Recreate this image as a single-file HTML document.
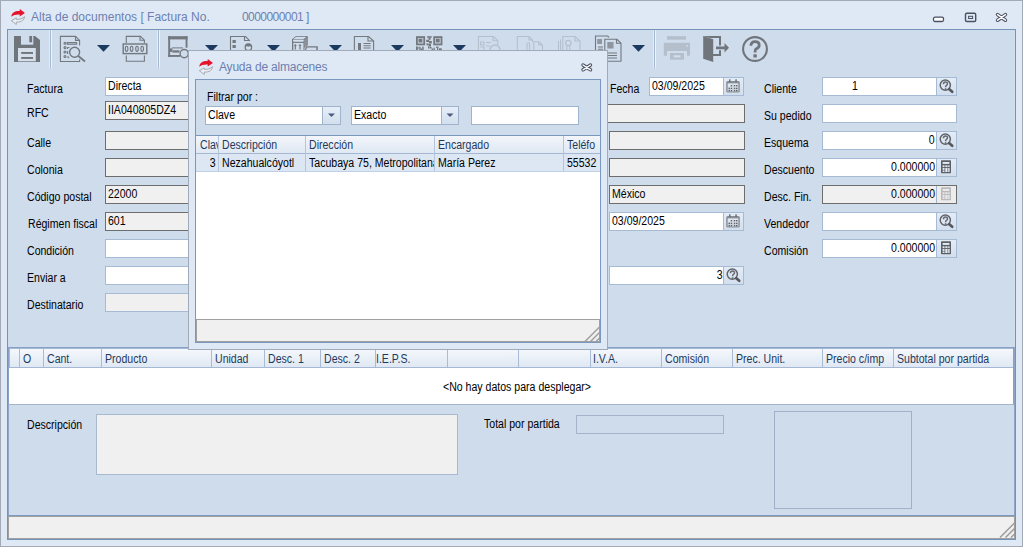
<!DOCTYPE html>
<html><head><meta charset="utf-8">
<style>
*{margin:0;padding:0;box-sizing:border-box}
html,body{width:1023px;height:547px;overflow:hidden}
body{position:relative;background:#dfe9f5;font-family:"Liberation Sans",sans-serif;font-size:11px;color:#000;letter-spacing:-0.2px}
.a{position:absolute}
.win{left:0;top:0;width:1023px;height:547px;border:1px solid #a3aab5}
.title{left:31px;top:10px;font-size:12px;letter-spacing:0;color:#6d7fb0;white-space:pre}
.panel{left:7px;top:29px;width:1009px;height:511px;background:#cfdcec;border:1px solid #7393b9}
.lbl{white-space:nowrap;line-height:12px}
.inp{background:#fff;border:1px solid #a7bad4;height:19px;line-height:16px;padding-left:2px;white-space:nowrap;overflow:hidden}
.dis{background:#f0f0f0;border:1px solid #6d6d6d;height:19px;line-height:16px;padding-left:2px;white-space:nowrap;overflow:hidden}
.disl{background:#f0f0f0;border:1px solid #a7bad4;height:19px}
.sep{width:2px;background:linear-gradient(90deg,#a9bdd6 0 1px,#f4f8fc 1px 2px)}
.btn{width:21px;height:19px;border:1px solid #a7bad4;background:linear-gradient(#e3ecf7,#d3dfee)}
.btn svg{display:block}
.hd{color:#1e395d;line-height:16px;white-space:nowrap}
.tx{position:absolute;font-size:12px;line-height:13px;letter-spacing:0;white-space:nowrap;transform:scaleX(.88);transform-origin:0 0}
.txr{transform-origin:100% 0}
.txc{transform-origin:50% 0}
.dd{width:0;height:0;border-left:6.5px solid transparent;border-right:6.5px solid transparent;border-top:7px solid #1b3a60}
</style></head><body>
<div class="a win"></div>

<!-- title icon -->
<svg class="a" style="left:10px;top:8px" width="17" height="17" viewBox="0 0 17 17">
  <path d="M1.3 8.8 C1.6 5 4.6 3 9.6 3.1 L9.8 1 L14.9 5 L9.7 8.4 L9.7 6.6 C6 6.4 3.4 7.2 1.3 8.8 Z" fill="#e5142b"/>
  <path d="M14.6 8.6 C14.2 12.2 11.4 14.2 6.4 14.1 L6.3 16.5 L1.3 12.7 L6.3 9.9 L6.3 11.4 C10 11.5 12.6 10.6 14.6 8.6 Z" fill="#e9eef4" stroke="#a7abb0" stroke-width="1"/>
</svg>
<div class="a title">Alta de documentos [ Factura No.</div>
<div class="a title" style="left:242px;letter-spacing:-0.55px">0000000001 ]</div>

<!-- window controls -->
<svg class="a" style="left:930px;top:10px" width="80" height="15" viewBox="0 0 80 15">
  <rect x="3.5" y="7.2" width="10" height="4.3" rx="1.5" fill="#fff" stroke="#4b5062" stroke-width="1.3"/>
  <rect x="35.5" y="3.3" width="10.2" height="8.2" rx="1.3" fill="none" stroke="#4b5062" stroke-width="1.4"/>
  <rect x="38.6" y="6.3" width="4" height="2.2" fill="none" stroke="#4b5062" stroke-width="1"/>
  <path d="M67.6 4.6 L75.4 10.2 M75.4 4.6 L67.6 10.2" stroke="#4b5062" stroke-width="3.6" stroke-linecap="round"/>
  <path d="M67.6 4.6 L75.4 10.2 M75.4 4.6 L67.6 10.2" stroke="#fff" stroke-width="1.5" stroke-linecap="round"/>
</svg>

<div class="a panel"></div>

<!-- TOOLBAR -->
<svg class="a" style="left:0;top:0" width="800" height="70" viewBox="0 0 800 70">
<g fill="none" stroke-linejoin="miter">
<!-- separators -->
<rect x="49" y="30" width="1" height="38" fill="#e4ebf5"/><rect x="50" y="30" width="1" height="38" fill="#a6b9d3"/><rect x="51" y="30" width="1" height="38" fill="#eef3f9"/>
<rect x="157" y="30" width="1" height="38" fill="#e4ebf5"/><rect x="158" y="30" width="1" height="38" fill="#a6b9d3"/><rect x="159" y="30" width="1" height="38" fill="#eef3f9"/>
<rect x="653" y="30" width="1" height="38" fill="#e4ebf5"/><rect x="654" y="30" width="1" height="38" fill="#a6b9d3"/><rect x="655" y="30" width="1" height="38" fill="#eef3f9"/>
<!-- save -->
<path d="M14 36 H35 L40 40 V62 H14 Z" fill="#70757c"/>
<rect x="21" y="36" width="12.3" height="8.7" fill="#cfdcec"/>
<rect x="29.3" y="36" width="2.8" height="6.3" fill="#70757c"/>
<rect x="18" y="48" width="17.8" height="13.3" fill="#d4dfeb"/>
<rect x="21.2" y="52" width="11.8" height="1.9" fill="#70757c"/>
<rect x="21.2" y="57" width="11.8" height="1.9" fill="#70757c"/>
<!-- search doc -->
<g stroke="#73787f" stroke-width="1.1">
<path d="M79.6 45.5 V40.4 L75.5 36.4 H60.4 V61.5 H79.6 V59.5"/>
<path d="M75.5 36.4 V40.4 H79.6"/>
<rect x="67.3" y="42.6" width="9.3" height="1.6"/>
<circle cx="65" cy="43.3" r="1"/><circle cx="65" cy="47.6" r="1"/><circle cx="65" cy="52" r="1"/><circle cx="65" cy="56.5" r="1"/>
<path d="M67.5 47.5 H69.5 M67.5 49 V47.5 M67.6 51 V54 M67.5 56.5 L69 58"/>
<circle cx="74.6" cy="52.2" r="5" stroke-width="1.4"/>
<path d="M78.3 56 L85 61.5" stroke-width="1.8"/>
</g>
<!-- dropdown arrows -->
<g fill="#1b3a60">
<path d="M97 45 H110 L103.5 51.8 Z"/>
<path d="M205 45 H218 L211.5 51.8 Z"/>
<path d="M267 45 H280 L273.5 51.8 Z"/>
<path d="M329 45 H342 L335.5 51.8 Z"/>
<path d="M391 45 H404 L397.5 51.8 Z"/>
<path d="M453 45 H466 L459.5 51.8 Z"/>
<path d="M632 45 H645 L638.5 51.8 Z"/>
</g>
<!-- 0000 -->
<g stroke="#73787f" stroke-width="1.1">
<path d="M126.3 43 V36.4 H140.5 L144.4 40.3 V43"/>
<path d="M140 36.4 V40.3 H144.4"/>
<path d="M126.3 55.5 V61.3 H144.4 V55.5"/>
<rect x="123.2" y="44" width="23.6" height="9.6" stroke-width="1.4"/>
<ellipse cx="126.6" cy="48.8" rx="1.3" ry="2.6"/><ellipse cx="131.6" cy="48.8" rx="1.3" ry="2.6"/>
<ellipse cx="137" cy="48.8" rx="1.3" ry="2.6"/><ellipse cx="142.2" cy="48.8" rx="1.3" ry="2.6"/>
</g>
<!-- monitor icon -->
<g fill="#73787f">
<rect x="168.2" y="36.2" width="19.3" height="3.2"/>
<rect x="168.2" y="36.2" width="1.9" height="20.7"/>
<rect x="185.6" y="36.2" width="1.9" height="11.5"/>
<rect x="168.2" y="55" width="12" height="1.9"/>
<rect x="172" y="47.4" width="11" height="1"/>
<rect x="170" y="48.4" width="2.4" height="3.5"/>
<rect x="172.4" y="50.3" width="7" height="2.3"/>
</g>
<circle cx="184.2" cy="53.6" r="4.1" fill="#cfdcec" stroke="#73787f" stroke-width="1.4"/>
<!-- icon 7 person doc -->
<g stroke="#73787f" stroke-width="1.1" fill="none">
<path d="M230.5 50 V36.5 H245.5 L249.8 40.8"/>
<path d="M244.5 36.5 V40.5 H249.8"/>
</g>
<g fill="#73787f">
<rect x="232.5" y="40" width="3.3" height="3"/><rect x="232.5" y="45" width="3.3" height="3"/>
</g>
<circle cx="248.4" cy="47.2" r="3.2" fill="#d5dfea" stroke="#73787f" stroke-width="1.3"/>
<path d="M245.2 47 A3.2 3.2 0 0 1 251.6 47 Q250 45.6 248.4 46.8 Q246.8 45.6 245.2 47 Z" fill="#73787f"/>
<!-- icon 8 box truck -->
<g fill="#73787f">
<path d="M292 50 V39.3 L296 36 H307.7 V45 L304.3 48.5 V50 H303.5 V39.8 H293.3 V50 Z"/>
<path d="M293 39.3 L296.3 36.8 H306.5 L303.5 39.3 Z" fill="#cfdcec"/>
<path d="M304 40 L307.7 36.5 V45 L304 48.5 Z" fill="#8b9096"/>
<rect x="293" y="41.6" width="11" height="1.3" fill="#73787f"/>
<rect x="293.3" y="40.1" width="10.2" height="1.3" fill="#d8e2ee"/>
<path d="M295.3 44 L297 45.8 H295.9 V49.5 H294.7 V45.8 H293.6 Z M300 44 L301.7 45.8 H300.6 V49.5 H299.4 V45.8 H298.3 Z"/>
<path d="M304.5 50 L306.8 46.3 H317.8 V50 H316.3 V47.6 H307.3 L305.9 50 Z"/>
</g>
<!-- icon 9 doc lines -->
<g stroke="#73787f" stroke-width="1.1">
<path d="M354.4 50 V36.5 H368.6 L373.6 41 V50"/>
<path d="M368 36.5 V41 H373.6"/>
<path d="M363.5 43.5 H370.7 M363.5 45.8 H370.7 M363.5 48 H370.7"/>
</g>
<rect x="358" y="43" width="3" height="7" fill="#73787f"/>
<!-- icon 10 QR -->
<g stroke="#73787f" stroke-width="1.8" fill="none">
<rect x="416.9" y="37.1" width="7.3" height="7.3"/><rect x="434.2" y="37.1" width="7.3" height="7.3"/>
</g>
<g fill="#73787f">
<rect x="418.5" y="38.6" width="3.9" height="3.9"/><rect x="435.8" y="38.6" width="3.9" height="3.9"/>
<rect x="427.2" y="36.2" width="4.5" height="1.6"/><rect x="428.5" y="37.8" width="2" height="2"/>
<rect x="426.2" y="39.8" width="3" height="2.2"/><rect x="429" y="41" width="2.8" height="2.5"/>
<rect x="426.5" y="43.3" width="2" height="2"/><rect x="428.5" y="44" width="2.5" height="2.5"/><rect x="428" y="46.5" width="1.6" height="2"/>
<rect x="416" y="46.5" width="1.8" height="3.5"/><rect x="417.8" y="47.3" width="1.5" height="1.3"/><rect x="419.3" y="46.6" width="1.3" height="3.4"/><rect x="420.6" y="48.4" width="1.5" height="1.6"/><rect x="422.2" y="46.6" width="1.5" height="3.4"/>
<rect x="430" y="47" width="1.6" height="1.5"/><rect x="431.6" y="48.5" width="1.5" height="1.5"/><rect x="433.5" y="47.6" width="1.3" height="2.4"/>
<rect x="436" y="46.6" width="2.5" height="1.3"/><rect x="437" y="47.9" width="1.3" height="2.1"/><rect x="439" y="48.3" width="2.8" height="1.7"/>
</g>
<!-- disabled icons -->
<g stroke="#b4c0ce" stroke-width="1.1">
<path d="M478.4 50 V36.5 H493.5 L497.8 40.8 V45"/>
<path d="M493 36.5 V40.8 H497.8"/>
<path d="M480.5 42 H484 V45 H480.5 Z M486 42.5 H491 M480.5 47 H484 V50 M486 46 H490"/>
<path d="M490 50 A5 5 0 0 1 500 50" stroke-width="1.4"/>
<path d="M517.3 50 V36.5 H529 L532.5 40 V42 M529 36.5 V40 H532.5"/>
<path d="M533.8 50 V41.8 H539 L542.5 45 V50 M538.8 41.8 V45 H542.5"/>
<path d="M527 50 V44 A1.3 1.3 0 0 1 529.6 44 V50"/>
<path d="M558.5 50 V41 M560.6 50 V39.5"/>
<path d="M562.8 50 V36.5 H575 L580 41 V50 M575 36.5 V41 H580"/>
<circle cx="568.3" cy="43" r="2.7" stroke-width="1.2"/>
<path d="M566.8 45.5 V50 M569.8 45.5 V50"/>
</g>
<!-- icon 14 docs QR -->
<g stroke="#73787f" stroke-width="1.1">
<path d="M595.5 50 V36 H607.7 L609 37.3"/>
<path d="M604.8 61.2 V39.3 H617 L621 43.3 V61.2 Z" fill="#cfdcec"/>
<path d="M616.5 39.3 V43.3 H621"/>
<path d="M598 47 H603 M598 49.3 H603"/>
<path d="M608 53 H617 M608 55.5 H617 M608 58 H617"/>
</g>
<g fill="#73787f">
<rect x="597.2" y="39" width="4.8" height="5" opacity="0.7"/>
<rect x="607.3" y="42" width="6.2" height="6.5" opacity="0.7"/>
</g>
<!-- printer disabled -->
<g fill="#b4bfcb">
<rect x="667" y="36.2" width="19" height="3.5"/>
<path d="M663.8 42.8 H690 V55.8 H687 V51 H667 V55.8 H663.8 Z"/>
<rect x="670" y="53" width="14" height="6.7"/>
</g>
<rect x="673.5" y="55.2" width="7" height="2.3" fill="#cfdcec"/>
<rect x="686.3" y="45" width="1.6" height="1.6" fill="#cfdcec"/>
<!-- exit door -->
<g fill="#70757c">
<path d="M703.2 36 L713.2 39.2 V62 L703.2 58.8 Z"/>
<path d="M703.2 36 H721 V45.5 H719 V38 H710 Z"/>
<path d="M712 56 H721 V50.2 H719 V54 H712 Z"/>
<path d="M716 46.4 H724.5 V43 L729 47.8 L724.5 52.6 V49.2 H716 Z"/>
</g>
<!-- help -->
<circle cx="755" cy="49" r="11.9" stroke="#70757c" stroke-width="2.1" fill="none"/>
<path d="M750.9 45.8 Q751 41.6 755.1 41.6 Q759.2 41.6 759.2 45.2 Q759.2 47.5 756.6 48.6 Q755.1 49.3 755.1 51.5 V52.5" stroke="#70757c" stroke-width="2.8" fill="none"/>
<rect x="753.4" y="54.3" width="3.4" height="3.2" fill="#70757c"/>
</g>
</svg>


<!-- LEFT FORM -->

<div class="a inp" style="left:105px;top:77px;width:300px"></div>
<div class="a dis" style="left:105px;top:101px;width:300px"></div>
<div class="a dis" style="left:105px;top:131px;width:300px"></div>
<div class="a dis" style="left:105px;top:158px;width:300px"></div>
<div class="a dis" style="left:105px;top:185px;width:300px"></div>
<div class="a dis" style="left:105px;top:212px;width:300px"></div>
<div class="a inp" style="left:105px;top:239px;width:300px"></div>
<div class="a inp" style="left:105px;top:266px;width:300px"></div>
<div class="a disl" style="left:105px;top:293px;width:300px"></div>


<!-- RIGHT FORM COL 1 -->
<div class="a inp" style="left:649px;top:77px;width:75px"></div>
<div class="a btn" style="left:723px;top:77px"><svg width="19" height="17"><rect x="2.2" y="3" width="13.6" height="11.6" rx="1.5" fill="#8a8f96"/><rect x="3.7" y="5.4" width="10.6" height="8" fill="#e2eaf4"/><rect x="5" y="1.3" width="1.5" height="3" fill="#6d7279"/><rect x="11.3" y="1.3" width="1.5" height="3" fill="#6d7279"/><g fill="#5d6168"><rect x="6.7" y="7" width="1.5" height="1.5"/><rect x="9.8" y="7" width="1.5" height="1.5"/><rect x="12" y="7" width="1.5" height="1.5"/><rect x="4.5" y="9.6" width="1.5" height="1.5"/><rect x="6.7" y="9.6" width="1.5" height="1.5"/><rect x="9.8" y="9.6" width="1.5" height="1.5"/><rect x="12" y="9.6" width="1.5" height="1.5"/><rect x="4.5" y="11.9" width="1.5" height="1.5"/><rect x="6.7" y="11.9" width="1.5" height="1.5"/><rect x="9.8" y="11.9" width="1.5" height="1.5"/><rect x="12" y="11.9" width="1.5" height="1.5"/></g><g fill="#c4ccd6"><rect x="4" y="8.7" width="10" height="0.6"/><rect x="4" y="11.2" width="10" height="0.6"/><rect x="8.6" y="6" width="0.8" height="7"/></g></svg></div>
<div class="a dis" style="left:560px;top:104px;width:185px"></div>
<div class="a dis" style="left:609px;top:131px;width:136px"></div>
<div class="a dis" style="left:609px;top:158px;width:136px"></div>
<div class="a dis" style="left:609px;top:185px;width:136px"></div>
<div class="a inp" style="left:609px;top:212px;width:115px"></div>
<div class="a btn" style="left:723px;top:212px"><svg width="19" height="17"><rect x="2.2" y="3" width="13.6" height="11.6" rx="1.5" fill="#8a8f96"/><rect x="3.7" y="5.4" width="10.6" height="8" fill="#e2eaf4"/><rect x="5" y="1.3" width="1.5" height="3" fill="#6d7279"/><rect x="11.3" y="1.3" width="1.5" height="3" fill="#6d7279"/><g fill="#5d6168"><rect x="6.7" y="7" width="1.5" height="1.5"/><rect x="9.8" y="7" width="1.5" height="1.5"/><rect x="12" y="7" width="1.5" height="1.5"/><rect x="4.5" y="9.6" width="1.5" height="1.5"/><rect x="6.7" y="9.6" width="1.5" height="1.5"/><rect x="9.8" y="9.6" width="1.5" height="1.5"/><rect x="12" y="9.6" width="1.5" height="1.5"/><rect x="4.5" y="11.9" width="1.5" height="1.5"/><rect x="6.7" y="11.9" width="1.5" height="1.5"/><rect x="9.8" y="11.9" width="1.5" height="1.5"/><rect x="12" y="11.9" width="1.5" height="1.5"/></g><g fill="#c4ccd6"><rect x="4" y="8.7" width="10" height="0.6"/><rect x="4" y="11.2" width="10" height="0.6"/><rect x="8.6" y="6" width="0.8" height="7"/></g></svg></div>
<div class="a inp" style="left:609px;top:266px;width:115px"></div>
<div class="a btn" style="left:723px;top:266px"><svg width="19" height="17"><circle cx="8.3" cy="7.1" r="5.1" fill="none" stroke="#5f6369" stroke-width="1.5"/><path d="M6.4 6.2 Q6.5 3.9 8.5 3.9 Q10.5 3.9 10.5 5.7 Q10.5 6.8 9.4 7.4 Q8.6 7.9 8.6 9.2" fill="none" stroke="#686c72" stroke-width="1.5"/><rect x="7.8" y="10.2" width="1.6" height="1.6" fill="#686c72"/><path d="M12.3 11.2 L15.2 13.8" stroke="#55595f" stroke-width="2.7" stroke-linecap="round"/></svg></div>

<!-- RIGHT FORM COL 2 -->

<div class="a inp" style="left:822px;top:77px;width:115px"></div>
<div class="a btn" style="left:936px;top:77px"><svg width="19" height="17"><circle cx="8.3" cy="7.1" r="5.1" fill="none" stroke="#5f6369" stroke-width="1.5"/><path d="M6.4 6.2 Q6.5 3.9 8.5 3.9 Q10.5 3.9 10.5 5.7 Q10.5 6.8 9.4 7.4 Q8.6 7.9 8.6 9.2" fill="none" stroke="#686c72" stroke-width="1.5"/><rect x="7.8" y="10.2" width="1.6" height="1.6" fill="#686c72"/><path d="M12.3 11.2 L15.2 13.8" stroke="#55595f" stroke-width="2.7" stroke-linecap="round"/></svg></div>
<div class="a inp" style="left:822px;top:104px;width:135px"></div>
<div class="a inp" style="left:822px;top:131px;width:115px"></div>
<div class="a btn" style="left:936px;top:131px"><svg width="19" height="17"><circle cx="8.3" cy="7.1" r="5.1" fill="none" stroke="#5f6369" stroke-width="1.5"/><path d="M6.4 6.2 Q6.5 3.9 8.5 3.9 Q10.5 3.9 10.5 5.7 Q10.5 6.8 9.4 7.4 Q8.6 7.9 8.6 9.2" fill="none" stroke="#686c72" stroke-width="1.5"/><rect x="7.8" y="10.2" width="1.6" height="1.6" fill="#686c72"/><path d="M12.3 11.2 L15.2 13.8" stroke="#55595f" stroke-width="2.7" stroke-linecap="round"/></svg></div>
<div class="a inp" style="left:822px;top:158px;width:115px"></div>
<div class="a btn" style="left:936px;top:158px;color:#5f6369"><svg width="19" height="17"><rect x="4" y="1.3" width="10" height="12.9" rx="0.7" fill="#5c6066"/><rect x="5.6" y="3" width="6.8" height="1.9" fill="#e4ebf4"/><g fill="#e4ebf4"><rect x="5.6" y="6.3" width="1.9" height="1.8"/><rect x="8.3" y="6.3" width="2.2" height="1.8"/><rect x="11.2" y="6.3" width="1.4" height="1.8"/><rect x="5.6" y="9" width="1.9" height="1.9"/><rect x="8.3" y="9" width="2.2" height="4"/><rect x="11.2" y="9" width="1.4" height="4"/><rect x="5.6" y="11.5" width="1.9" height="1.5"/></g></svg></div>
<div class="a dis" style="left:822px;top:185px;width:135px"></div>
<div class="a" style="left:936px;top:186px;width:20px;height:17px;border-left:1px solid #a4b5cf;background:#ececec;color:#b3b3b3"><svg width="19" height="17"><rect x="4" y="1.3" width="10" height="12.9" rx="0.7" fill="#b9b9b9"/><rect x="5.6" y="3" width="6.8" height="1.9" fill="#ececec"/><g fill="#ececec"><rect x="5.6" y="6.3" width="1.9" height="1.8"/><rect x="8.3" y="6.3" width="2.2" height="1.8"/><rect x="11.2" y="6.3" width="1.4" height="1.8"/><rect x="5.6" y="9" width="1.9" height="1.9"/><rect x="8.3" y="9" width="2.2" height="4"/><rect x="11.2" y="9" width="1.4" height="4"/><rect x="5.6" y="11.5" width="1.9" height="1.5"/></g></svg></div>
<div class="a inp" style="left:822px;top:212px;width:115px"></div>
<div class="a btn" style="left:936px;top:212px"><svg width="19" height="17"><circle cx="8.3" cy="7.1" r="5.1" fill="none" stroke="#5f6369" stroke-width="1.5"/><path d="M6.4 6.2 Q6.5 3.9 8.5 3.9 Q10.5 3.9 10.5 5.7 Q10.5 6.8 9.4 7.4 Q8.6 7.9 8.6 9.2" fill="none" stroke="#686c72" stroke-width="1.5"/><rect x="7.8" y="10.2" width="1.6" height="1.6" fill="#686c72"/><path d="M12.3 11.2 L15.2 13.8" stroke="#55595f" stroke-width="2.7" stroke-linecap="round"/></svg></div>
<div class="a inp" style="left:822px;top:239px;width:115px"></div>
<div class="a btn" style="left:936px;top:239px;color:#5f6369"><svg width="19" height="17"><rect x="4" y="1.3" width="10" height="12.9" rx="0.7" fill="#5c6066"/><rect x="5.6" y="3" width="6.8" height="1.9" fill="#e4ebf4"/><g fill="#e4ebf4"><rect x="5.6" y="6.3" width="1.9" height="1.8"/><rect x="8.3" y="6.3" width="2.2" height="1.8"/><rect x="11.2" y="6.3" width="1.4" height="1.8"/><rect x="5.6" y="9" width="1.9" height="1.9"/><rect x="8.3" y="9" width="2.2" height="4"/><rect x="11.2" y="9" width="1.4" height="4"/><rect x="5.6" y="11.5" width="1.9" height="1.5"/></g></svg></div>

<!-- MAIN GRID -->
<div class="a" style="left:8px;top:347px;width:1006px;height:58px;background:#fff;border:1px solid #86a1c5;border-bottom-color:#a3b5cd"></div>
<div class="a" style="left:9px;top:348px;width:1004px;height:20px;border-top:1px solid #a6b9d3;border-left:1px solid #a6b9d3"></div>
<div class="a" style="left:10px;top:349px;width:1003px;height:19px;background:linear-gradient(#f5f8fc,#dfe8f3);border-bottom:1px solid #a4b8d3"></div>
<div class="a" style="left:19px;top:349px;width:1px;height:18px;background:#a9bcd6"></div>
<div class="a" style="left:43px;top:349px;width:1px;height:18px;background:#a9bcd6"></div>
<div class="a" style="left:101px;top:349px;width:1px;height:18px;background:#a9bcd6"></div>
<div class="a" style="left:211px;top:349px;width:1px;height:18px;background:#a9bcd6"></div>
<div class="a" style="left:264px;top:349px;width:1px;height:18px;background:#a9bcd6"></div>
<div class="a" style="left:320px;top:349px;width:1px;height:18px;background:#a9bcd6"></div>
<div class="a" style="left:375px;top:349px;width:1px;height:18px;background:#a9bcd6"></div>
<div class="a" style="left:447px;top:349px;width:1px;height:18px;background:#a9bcd6"></div>
<div class="a" style="left:518px;top:349px;width:1px;height:18px;background:#a9bcd6"></div>
<div class="a" style="left:590px;top:349px;width:1px;height:18px;background:#a9bcd6"></div>
<div class="a" style="left:661px;top:349px;width:1px;height:18px;background:#a9bcd6"></div>
<div class="a" style="left:732px;top:349px;width:1px;height:18px;background:#a9bcd6"></div>
<div class="a" style="left:822px;top:349px;width:1px;height:18px;background:#a9bcd6"></div>
<div class="a" style="left:893px;top:349px;width:1px;height:18px;background:#a9bcd6"></div>

<!-- BOTTOM -->
<div class="a" style="left:8px;top:405px;width:1px;height:110px;background:#8ea5c6"></div>
<div class="a" style="left:1014px;top:347px;width:1px;height:168px;background:#8ea5c6"></div>
<div class="a" style="left:96px;top:414px;width:362px;height:61px;background:#f0f0f0;border:1px solid #a8b9cf"></div>
<div class="a" style="left:576px;top:415px;width:148px;height:19px;border:1px solid #a3b3ca"></div>
<div class="a" style="left:774px;top:411px;width:138px;height:98px;border:1px solid #9fb0c8"></div>

<!-- STATUS BAR -->
<div class="a" style="left:8px;top:515px;width:1007px;height:1px;background:#7c99be"></div>
<div class="a" style="left:8px;top:516px;width:1007px;height:23px;background:#f0f0f0;border:1px solid #a0a0a0"></div>
<svg class="a" style="left:999px;top:522px" width="16" height="16" viewBox="0 0 16 16">
<path d="M1 15.5 L15.5 1 M6.5 15.5 L15.5 6.5 M12 15.5 L15.5 12" stroke="#9c9c9c" stroke-width="1.5"/>
</svg>

<!-- TEXTMAIN -->
<div class="tx" style="left:27.00px;top:83px;">Factura</div>
<div class="tx" style="left:27.00px;top:107px;">RFC</div>
<div class="tx" style="left:27.00px;top:137px;">Calle</div>
<div class="tx" style="left:27.00px;top:164px;">Colonia</div>
<div class="tx" style="left:27.00px;top:191px;">Código postal</div>
<div class="tx" style="left:28.00px;top:218px;">Régimen fiscal</div>
<div class="tx" style="left:27.00px;top:245px;">Condición</div>
<div class="tx" style="left:27.00px;top:272px;">Enviar a</div>
<div class="tx" style="left:27.00px;top:299px;">Destinatario</div>
<div class="tx" style="left:610.00px;top:83px;">Fecha</div>
<div class="tx" style="left:764.00px;top:83px;">Cliente</div>
<div class="tx" style="left:764.00px;top:110px;">Su pedido</div>
<div class="tx" style="left:764.00px;top:137px;">Esquema</div>
<div class="tx" style="left:764.00px;top:164px;">Descuento</div>
<div class="tx" style="left:764.00px;top:191px;">Desc. Fin.</div>
<div class="tx" style="left:764.00px;top:218px;">Vendedor</div>
<div class="tx" style="left:764.00px;top:245px;">Comisión</div>
<div class="tx" style="left:108.00px;top:80px;">Directa</div>
<div class="tx" style="left:108.00px;top:104px;">IIA040805DZ4</div>
<div class="tx" style="left:108.00px;top:188px;">22000</div>
<div class="tx" style="left:108.00px;top:215px;">601</div>
<div class="tx" style="left:652.00px;top:80px;">03/09/2025</div>
<div class="tx" style="left:612.00px;top:188px;">México</div>
<div class="tx" style="left:612.00px;top:215px;">03/09/2025</div>
<div class="tx txr" style="right:300.02px;top:269px;">3</div>
<div class="tx" style="left:852.00px;top:80px;">1</div>
<div class="tx txr" style="right:88.02px;top:134px;">0</div>
<div class="tx txr" style="right:87.96px;top:161px;">0.000000</div>
<div class="tx txr" style="right:87.96px;top:188px;">0.000000</div>
<div class="tx txr" style="right:87.96px;top:242px;">0.000000</div>
<div class="tx" style="left:23.00px;top:353px;color:#1e395d;">O</div>
<div class="tx" style="left:47.00px;top:353px;color:#1e395d;">Cant.</div>
<div class="tx" style="left:105.00px;top:353px;color:#1e395d;">Producto</div>
<div class="tx" style="left:215.00px;top:353px;color:#1e395d;">Unidad</div>
<div class="tx" style="left:268.00px;top:353px;color:#1e395d;">Desc. 1</div>
<div class="tx" style="left:324.00px;top:353px;color:#1e395d;">Desc. 2</div>
<div class="tx" style="left:376.00px;top:353px;color:#1e395d;">I.E.P.S.</div>
<div class="tx" style="left:593.00px;top:353px;color:#1e395d;">I.V.A.</div>
<div class="tx" style="left:665.00px;top:353px;color:#1e395d;">Comisión</div>
<div class="tx" style="left:736.00px;top:353px;color:#1e395d;">Prec. Unit.</div>
<div class="tx" style="left:826.00px;top:353px;color:#1e395d;">Precio c/imp</div>
<div class="tx" style="left:897.00px;top:353px;color:#1e395d;">Subtotal por partida</div>
<div class="tx" style="left:443.00px;top:381px;">&lt;No hay datos para desplegar&gt;</div>
<div class="tx" style="left:27.00px;top:419px;">Descripción</div>
<div class="tx" style="left:484.00px;top:418px;">Total por partida</div>
<!-- /TEXTMAIN -->
<!-- DIALOG -->
<div class="a" style="left:188px;top:50px;width:420px;height:300px;background:#dfe9f5;border:1px solid #a0aab8"></div>
<svg class="a" style="left:198px;top:58px" width="17" height="17" viewBox="0 0 17 17">
  <path d="M1.3 8.8 C1.6 5 4.6 3 9.6 3.1 L9.8 1 L14.9 5 L9.7 8.4 L9.7 6.6 C6 6.4 3.4 7.2 1.3 8.8 Z" fill="#e5142b"/>
  <path d="M14.6 8.6 C14.2 12.2 11.4 14.2 6.4 14.1 L6.3 16.5 L1.3 12.7 L6.3 9.9 L6.3 11.4 C10 11.5 12.6 10.6 14.6 8.6 Z" fill="#e9eef4" stroke="#a7abb0" stroke-width="1"/>
</svg>
<div class="a" style="left:219px;top:60px;font-size:12px;letter-spacing:-0.2px;color:#6d7fb0;white-space:nowrap">Ayuda de almacenes</div>
<svg class="a" style="left:578px;top:60px" width="18" height="14" viewBox="0 0 18 14">
  <path d="M5 5 L12.5 9.8 M12.5 5 L5 9.8" stroke="#4b5062" stroke-width="3.4" stroke-linecap="round"/>
  <path d="M5 5 L12.5 9.8 M12.5 5 L5 9.8" stroke="#fff" stroke-width="1.4" stroke-linecap="round"/>
</svg>
<!-- inner panel -->
<div class="a" style="left:195px;top:79px;width:406px;height:264px;background:#cfdcec;border:1px solid #7a97bd"></div>
<!-- combo 1 -->
<div class="a inp" style="left:205px;top:106px;width:136px;border-color:#9fb3cd;line-height:16px"></div>
<div class="a" style="left:322px;top:106px;width:19px;height:19px;border:1px solid #9fb3cd;background:linear-gradient(#e6eef8,#d3dfee)"></div>
<svg class="a" style="left:322px;top:106px" width="19" height="19"><path d="M6 7.5 H13 L9.5 11 Z" fill="#4a5a7a"/></svg>
<!-- combo 2 -->
<div class="a inp" style="left:351px;top:106px;width:108px;border-color:#9fb3cd"></div>
<div class="a" style="left:441px;top:106px;width:18px;height:19px;border:1px solid #9fb3cd;background:linear-gradient(#e6eef8,#d3dfee)"></div>
<svg class="a" style="left:441px;top:106px" width="18" height="19"><path d="M5.5 7.5 H12.5 L9 11 Z" fill="#4a5a7a"/></svg>
<!-- text -->
<div class="a inp" style="left:471px;top:106px;width:108px;border-color:#9fb3cd"></div>
<!-- grid -->
<div class="a" style="left:195px;top:135px;width:406px;height:208px;background:#fff;border:1px solid #7a97bd"></div>
<div class="a" style="left:196px;top:136px;width:404px;height:17px;background:linear-gradient(#f3f6fb,#dfe8f3)"></div>
<div class="a" style="left:196px;top:153px;width:404px;height:1px;background:#a4b8d3"></div>
<div class="a" style="left:196px;top:154px;width:404px;height:17px;background:#dde7f4"></div>
<div class="a" style="left:196px;top:171px;width:404px;height:1px;background:#c0d0e6"></div>
<div class="a" style="left:218px;top:136px;width:1px;height:35px;background:#b3c5de"></div>
<div class="a" style="left:305px;top:136px;width:1px;height:35px;background:#b3c5de"></div>
<div class="a" style="left:434px;top:136px;width:1px;height:35px;background:#b3c5de"></div>
<div class="a" style="left:563px;top:136px;width:1px;height:35px;background:#b3c5de"></div>
<!-- footer -->
<div class="a" style="left:196px;top:319px;width:404px;height:23px;background:#f0f0f0;border:1px solid #a0a0a0"></div>
<svg class="a" style="left:584px;top:326px" width="16" height="16" viewBox="0 0 16 16">
<path d="M1 15.5 L15.5 1 M6.5 15.5 L15.5 6.5 M12 15.5 L15.5 12" stroke="#a0a0a0" stroke-width="1.5"/>
</svg>

<!-- TEXTDLG -->
<div class="tx" style="left:207.00px;top:91px;">Filtrar por :</div>
<div class="tx" style="left:208.00px;top:109px;">Clave</div>
<div class="tx" style="left:354.00px;top:109px;">Exacto</div>
<div class="a" style="left:196px;top:139px;width:22px;height:13px;overflow:hidden"><div class="tx" style="left:4.00px;top:0;color:#1e395d;">Clave</div></div>
<div class="a" style="left:219px;top:139px;width:86px;height:13px;overflow:hidden"><div class="tx" style="left:3.00px;top:0;color:#1e395d;">Descripción</div></div>
<div class="a" style="left:306px;top:139px;width:128px;height:13px;overflow:hidden"><div class="tx" style="left:3.00px;top:0;color:#1e395d;">Dirección</div></div>
<div class="a" style="left:435px;top:139px;width:128px;height:13px;overflow:hidden"><div class="tx" style="left:3.00px;top:0;color:#1e395d;">Encargado</div></div>
<div class="a" style="left:564px;top:139px;width:36px;height:13px;overflow:hidden"><div class="tx" style="left:3.00px;top:0;color:#1e395d;">Teléfo</div></div>
<div class="tx txr" style="right:807.02px;top:157px;">3</div>
<div class="a" style="left:219px;top:157px;width:86px;height:13px;overflow:hidden"><div class="tx" style="left:3.00px;top:0;">Nezahualcóyotl</div></div>
<div class="a" style="left:306px;top:157px;width:128px;height:13px;overflow:hidden"><div class="tx" style="left:3.00px;top:0;">Tacubaya 75, Metropolitana</div></div>
<div class="a" style="left:435px;top:157px;width:128px;height:13px;overflow:hidden"><div class="tx" style="left:3.00px;top:0;">María Perez</div></div>
<div class="a" style="left:564px;top:157px;width:36px;height:13px;overflow:hidden"><div class="tx" style="left:3.00px;top:0;">55532</div></div>
<!-- /TEXTDLG -->
</body></html>
